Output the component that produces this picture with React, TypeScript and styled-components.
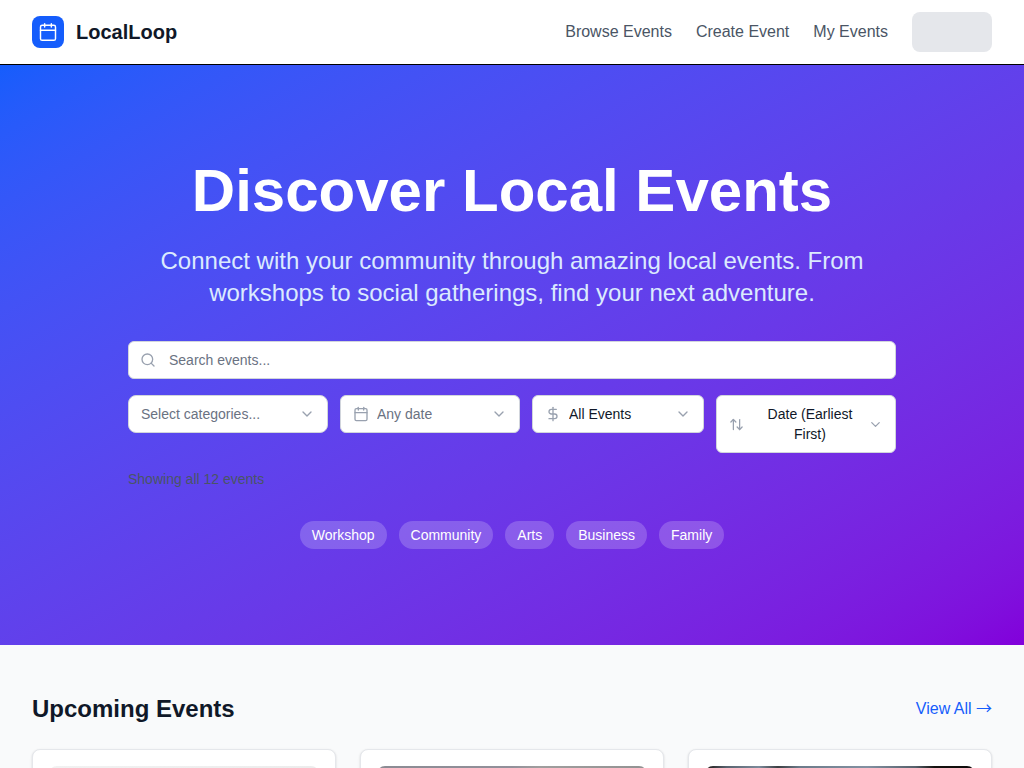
import React from "react";
import styled, { createGlobalStyle } from "styled-components";
import { ArrowUpDown, Calendar, ChevronDown, DollarSign, Search } from "lucide-react";

const GlobalStyle = createGlobalStyle`
  *, *::before, *::after { box-sizing: border-box; }
  body {
    margin: 0;
    background: #f9fafb;
    color: #101828;
    font-family: "Liberation Sans", Arial, sans-serif;
    font-size: 16px;
    line-height: 24px;
  }
  h1, h2, p { margin: 0; }
  a { text-decoration: none; }
  button, input, select { font: inherit; color: inherit; }
`;

const Header = styled.header`
  background: #fff;
  border-bottom: 1px solid #000;
`;

const HeaderInner = styled.div`
  display: flex;
  align-items: center;
  justify-content: space-between;
  max-width: 1280px;
  height: 64px;
  margin: 0 auto;
  padding: 0 32px;
`;

const Brand = styled.a`
  display: flex;
  align-items: center;
  gap: 12px;
  color: #101828;
  font-size: 20px;
  line-height: 28px;
  font-weight: 700;
`;

const BrandMark = styled.span`
  display: grid;
  place-items: center;
  width: 32px;
  height: 32px;
  border-radius: 8px;
  background: #155dfc;
  color: #fff;
`;

const Nav = styled.nav`
  display: flex;
  align-items: center;
  gap: 24px;
`;

const NavLink = styled.a`
  color: #4a5565;
`;

const AccountPlaceholder = styled.div`
  width: 80px;
  height: 40px;
  border-radius: 8px;
  background: #e5e7eb;
`;

const Hero = styled.section`
  padding: 96px 32px;
  background: #5c45ec linear-gradient(to bottom right in oklab, #155dfc, #8200db);
  color: #fff;
`;

const HeroInner = styled.div`
  max-width: 768px;
  margin: 0 auto;
`;

const HeroTitle = styled.h1`
  margin-bottom: 24px;
  font-size: 60px;
  line-height: 60px;
  font-weight: 700;
  text-align: center;
`;

const HeroText = styled.p`
  margin-bottom: 32px;
  color: #dbeafe;
  font-size: 24px;
  line-height: 32px;
  text-align: center;
`;

const Filters = styled.form`
  display: flex;
  flex-direction: column;
  gap: 16px;
  font-size: 14px;
  line-height: 20px;
`;

const Field = styled.div`
  position: relative;
`;

const FieldIcon = styled.span<{ $side: "left" | "right"; $inset?: number }>`
  position: absolute;
  top: 0;
  bottom: 0;
  ${({ $side, $inset = 13 }) => `${$side}: ${$inset}px`};
  display: flex;
  align-items: center;
  color: #99a1af;
  pointer-events: none;
`;

const SearchInput = styled.input`
  display: block;
  width: 100%;
  height: 38px;
  padding: 8px 40px;
  border: 1px solid #d1d5dc;
  border-radius: 6px;
  background: #fff;
  color: #101828;
  &::placeholder { color: #6a7282; opacity: 1; }
`;

const FilterRow = styled.div`
  display: grid;
  grid-template-columns: 200px 180px minmax(0, 1fr) 180px;
  align-items: start;
  gap: 12px;
`;

const Select = styled.select<{ $icon?: boolean; $muted?: boolean; $round?: boolean }>`
  display: block;
  appearance: none;
  width: 100%;
  height: 38px;
  padding: 8px 36px 8px ${({ $icon }) => ($icon ? "36px" : "12px")};
  border: 1px solid #d1d5dc;
  border-radius: ${({ $round }) => ($round ? "8px" : "6px")};
  background: #fff;
  color: ${({ $muted }) => ($muted ? "#6a7282" : "#101828")};
`;

const SortButton = styled.button`
  display: flex;
  align-items: center;
  width: 100%;
  padding: 8px 12px;
  border: 1px solid #d1d5dc;
  border-radius: 6px;
  background: #fff;
  color: #99a1af;
`;

const SortLabel = styled.span`
  flex: 1;
  margin-left: 8px;
  color: #101828;
  text-align: center;
`;

const ResultCount = styled.p`
  color: #4a5565;
`;

const TagList = styled.div`
  display: flex;
  flex-wrap: wrap;
  justify-content: center;
  gap: 12px;
  margin-top: 32px;
`;

const Tag = styled.button`
  padding: 4px 12px;
  border: 0;
  border-radius: 14px;
  background: rgba(255, 255, 255, 0.2);
  color: #fff;
  font-size: 14px;
  line-height: 20px;
`;

const Upcoming = styled.main`
  max-width: 1280px;
  margin: 0 auto;
  padding: 48px 32px;
`;

const SectionHead = styled.div`
  display: flex;
  align-items: center;
  justify-content: space-between;
  margin-bottom: 24px;
`;

const SectionTitle = styled.h2`
  font-size: 24px;
  line-height: 32px;
  font-weight: 700;
`;

const ViewAll = styled.a`
  color: #155dfc;
`;

const Arrow = styled.span`
  font-family: "Noto Sans CJK JP", sans-serif;
  line-height: 16px;
`;

const CardGrid = styled.div`
  display: grid;
  grid-template-columns: repeat(3, minmax(0, 1fr));
  gap: 24px;
`;

const Card = styled.article`
  padding: 16px;
  border: 1px solid #e5e7eb;
  border-radius: 8px;
  background: #fff;
  box-shadow: 0 1px 3px rgba(0, 0, 0, 0.1), 0 1px 2px rgba(0, 0, 0, 0.06);
`;

const CardCover = styled.div<{ $fill: string }>`
  height: 192px;
  border-radius: 8px;
  background: ${({ $fill }) => $fill};
`;

const navLinks = ["Browse Events", "Create Event", "My Events"];
const tags = ["Workshop", "Community", "Arts", "Business", "Family"];
const covers = [
  "linear-gradient(90deg, #f1f1f1, #ececec)",
  "linear-gradient(90deg, #8b8b93, #92909a 50%, #a09e9e 60%, #929292)",
  "linear-gradient(90deg, #1c1512, #59636f 8%, #7d8b9b 20%, #3b3e42 27%, #6c7b8a 35%, #8391a2 60%, #56606b 78%, #15120f 85%, #0d0b0a)",
];

export default function App() {
  return (
    <>
      <GlobalStyle />
      <Header>
        <HeaderInner>
          <Brand href="#">
            <BrandMark><Calendar size={20} strokeWidth={1.75} /></BrandMark>
            LocalLoop
          </Brand>
          <Nav>
            {navLinks.map((label) => <NavLink href="#" key={label}>{label}</NavLink>)}
            <AccountPlaceholder />
          </Nav>
        </HeaderInner>
      </Header>

      <Hero>
        <HeroInner>
          <HeroTitle>Discover Local Events</HeroTitle>
          <HeroText>
            Connect with your community through amazing local events. From workshops to social
            gatherings, find your next adventure.
          </HeroText>
          <Filters onSubmit={(event) => event.preventDefault()}>
            <Field>
              <SearchInput type="search" placeholder="Search events..." aria-label="Search events" />
              <FieldIcon $side="left" $inset={12}><Search size={16} /></FieldIcon>
            </Field>
            <FilterRow>
              <Field>
                <Select $muted $round aria-label="Categories">
                  <option>Select categories...</option>
                </Select>
                <FieldIcon $side="right"><ChevronDown size={16} /></FieldIcon>
              </Field>
              <Field>
                <Select $icon $muted aria-label="Date">
                  <option>Any date</option>
                </Select>
                <FieldIcon $side="left"><Calendar size={16} /></FieldIcon>
                <FieldIcon $side="right"><ChevronDown size={16} /></FieldIcon>
              </Field>
              <Field>
                <Select $icon aria-label="Price">
                  <option>All Events</option>
                </Select>
                <FieldIcon $side="left"><DollarSign size={16} /></FieldIcon>
                <FieldIcon $side="right"><ChevronDown size={16} /></FieldIcon>
              </Field>
              <SortButton type="button" aria-haspopup="listbox">
                <ArrowUpDown size={15} />
                <SortLabel>Date (Earliest First)</SortLabel>
                <ChevronDown size={15} />
              </SortButton>
            </FilterRow>
            <ResultCount>Showing all 12 events</ResultCount>
          </Filters>
          <TagList>
            {tags.map((tag) => <Tag type="button" key={tag}>{tag}</Tag>)}
          </TagList>
        </HeroInner>
      </Hero>

      <Upcoming>
        <SectionHead>
          <SectionTitle>Upcoming Events</SectionTitle>
          <ViewAll href="#">View All <Arrow>→</Arrow></ViewAll>
        </SectionHead>
        <CardGrid>
          {covers.map((fill) => <Card key={fill}><CardCover $fill={fill} /></Card>)}
        </CardGrid>
      </Upcoming>
    </>
  );
}
